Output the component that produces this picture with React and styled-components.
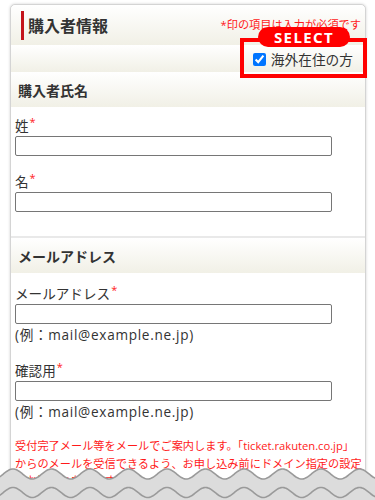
import React from "react";
import styled, { createGlobalStyle } from "styled-components";

const Global = createGlobalStyle`
  html, body { margin: 0; padding: 0; background: #fff; }
  body { font-family: "Open Sans", "Noto Sans CJK JP", sans-serif; color: #333; }
  * { box-sizing: border-box; }
`;

const Page = styled.div`
  position: relative;
  height: 500px;
  overflow: hidden;
  padding: 4px 0 0 10px;
`;

const Card = styled.div`
  width: 356px;
  background: #fff;
  border: 1px solid #d4d4d4;
  border-radius: 5px;
  box-shadow: 0 0 3px rgba(0, 0, 0, 0.18);
`;

const beige = "linear-gradient(to bottom, #ffffff 0%, #f1f0e6 100%)";

const HeaderBar = styled.div`
  height: 40px;
  display: flex;
  align-items: center;
  justify-content: space-between;
  padding: 0 4px 0 10px;
  background: ${beige};
  border-radius: 5px 5px 0 0;
`;

const Title = styled.h2`
  margin: 0;
  height: 29px;
  display: flex;
  align-items: center;
  border-left: 3px solid #c4141b;
  padding-left: 4px;
  font-family: "Noto Sans CJK JP", sans-serif;
  font-size: 16px;
  font-weight: 700;
  color: #333;
`;

const Note = styled.span`
  font-size: 11.2px;
  color: #ff1a1a;
  margin-top: -3px;
`;

const CheckRow = styled.div`
  position: relative;
  height: 27px;
  display: flex;
  align-items: center;
  justify-content: flex-end;
  padding-right: 12px;
  background: ${beige};
`;

const CheckLabel = styled.label`
  display: flex;
  align-items: center;
  gap: 5px;
  font-size: 13.7px;
  color: #333;
  input {
    margin: 1px 0 0 0;
    width: 13px;
    height: 13px;
  }
`;

const Frame = styled.div`
  position: absolute;
  top: -7px;
  right: -2px;
  width: 127px;
  height: 40px;
  border: 4px solid #ff0000;
`;

const Pill = styled.div`
  position: absolute;
  top: -15px;
  left: 14px;
  width: 92px;
  height: 20px;
  border-radius: 10px;
  background: #ff0000;
  color: #fff;
  font-family: "Noto Sans", "Open Sans", sans-serif;
  font-weight: 700;
  font-size: 15px;
  letter-spacing: 1.4px;
  display: flex;
  align-items: center;
  justify-content: center;
`;

const SectionHead = styled.div`
  height: ${(p) => p.$h}px;
  display: flex;
  align-items: center;
  padding-left: 7px;
  font-family: "Noto Sans CJK JP", sans-serif;
  font-size: 14px;
  font-weight: 700;
  color: #333;
  background: ${beige};
  border-top: ${(p) => (p.$line ? "2px solid #e9e9e9" : "none")};
`;

const Body = styled.div`
  padding: ${(p) => p.$pad};
  display: flex;
  flex-direction: column;
`;

const Field = styled.div`
  display: flex;
  flex-direction: column;
  & + & {
    margin-top: 16px;
  }
`;

const Label = styled.div`
  font-size: 13.6px;
  line-height: 20px;
  height: 20px;
  color: #333;
  sup {
    color: #ff1a1a;
    font-size: 11px;
    vertical-align: top;
    line-height: 11px;
    margin-left: 1px;
  }
`;

const Input = styled.input`
  width: 317px;
  height: 20px;
  margin: 0;
  border: 1px solid #767676;
  border-radius: 2px;
  background: #fff;
  padding: 0 4px;
  font: inherit;
`;

const Example = styled.div`
  font-size: 13.6px;
  line-height: 21px;
  letter-spacing: 0.7px;
  color: #333;
`;

const RedText = styled.p`
  margin: 15px -4px 0 0;
  font-size: 11.2px;
  line-height: 17.5px;
  color: #ff1a1a;
`;

const WaveBox = styled.svg`
  position: absolute;
  left: 0;
  top: 460px;
  width: 375px;
  height: 40px;
`;

function wavePath(cy, amp, period, phase, width) {
  let d = "";
  for (let x = -2; x <= width + 2; x += 1) {
    const y = cy - amp * Math.cos(((x - phase) / period) * Math.PI * 2);
    d += (x === -2 ? "M" : "L") + x + " " + y.toFixed(2) + " ";
  }
  return d;
}

function Waves() {
  const top = wavePath(14, 5, 38.5, 13, 377);
  const second = wavePath(32.5, 5, 38.5, 13, 377);
  return (
    <WaveBox viewBox="0 0 375 40">
      <path d={top + " L377 40 L-2 40 Z"} fill="#dcdcdc" />
      <path d={top} fill="none" stroke="#9a9a9a" strokeWidth="1.6" />
      <path d={second} fill="none" stroke="#9a9a9a" strokeWidth="1.6" />
    </WaveBox>
  );
}

function Req() {
  return <sup>*</sup>;
}

export default function App() {
  return (
    <>
      <Global />
      <Page>
        <Card>
          <HeaderBar>
            <Title>購入者情報</Title>
            <Note>*印の項目は入力が必須です</Note>
          </HeaderBar>
          <CheckRow>
            <CheckLabel>
              <input type="checkbox" defaultChecked />
              海外在住の方
            </CheckLabel>
            <Frame>
              <Pill>SELECT</Pill>
            </Frame>
          </CheckRow>
          <SectionHead $h={35}>購入者氏名</SectionHead>
          <Body $pad="9px 4px 24px">
            <Field>
              <Label>
                姓<Req />
              </Label>
              <Input type="text" />
            </Field>
            <Field>
              <Label>
                名<Req />
              </Label>
              <Input type="text" />
            </Field>
          </Body>
          <SectionHead $h={37} $line>
            メールアドレス
          </SectionHead>
          <Body $pad="11px 4px 40px">
            <Field>
              <Label>
                メールアドレス<Req />
              </Label>
              <Input type="text" />
              <Example>(例：mail@example.ne.jp)</Example>
            </Field>
            <Field>
              <Label>
                確認用<Req />
              </Label>
              <Input type="text" />
              <Example>(例：mail@example.ne.jp)</Example>
            </Field>
            <RedText>
              受付完了メール等をメールでご案内します。「ticket.rakuten.co.jp」からのメールを受信できるよう、お申し込み前にドメイン指定の設定をお願いいたします。
            </RedText>
          </Body>
        </Card>
        <Waves />
      </Page>
    </>
  );
}
